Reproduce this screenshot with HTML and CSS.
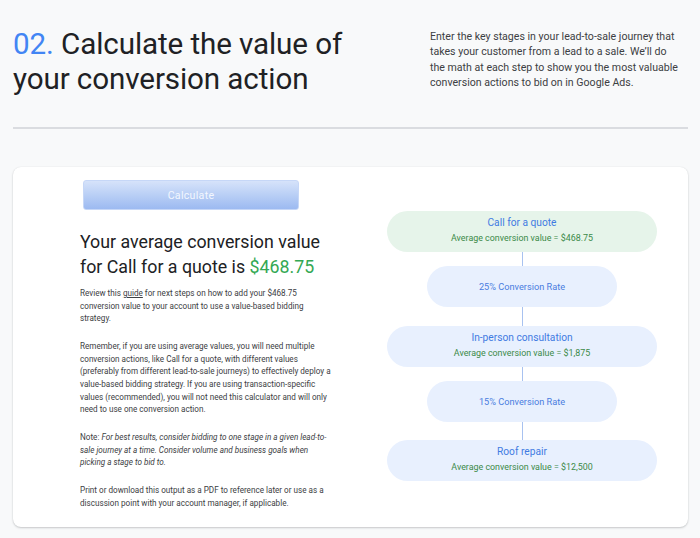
FILE: index.html
```html
<!DOCTYPE html>
<html lang="en">
<head>
<meta charset="utf-8">
<title>Calculate the value of your conversion action</title>
<link rel="stylesheet" href="styles.css">
</head>
<body>
<header class="intro">
  <h1 class="title"><span class="num">02.</span> Calculate the value of your conversion action</h1>
  <p class="lead">Enter the key stages in your lead-to-sale journey that takes your customer from a lead to a sale. We’ll do the math at each step to show you the most valuable conversion actions to bid on in Google Ads.</p>
</header>
<hr class="divider">
<section class="card">
  <div class="result">
    <div class="btn-wrap"><button class="calc" type="button">Calculate</button></div>
    <h2 class="result-title">Your average conversion value for Call for a quote is <span class="money">$468.75</span></h2>
    <p class="copy">Review this <a href="#" class="link">guide</a> for next steps on how to add your $468.75 conversion value to your account to use a value-based bidding strategy.</p>
    <p class="copy">Remember, if you are using average values, you will need multiple conversion actions, like Call for a quote, with different values (preferably from different lead-to-sale journeys) to effectively deploy a value-based bidding strategy. If you are using transaction-specific values (recommended), you will not need this calculator and will only need to use one conversion action.</p>
    <p class="copy">Note: <em>For best results, consider bidding to one stage in a given lead-to-sale journey at a time. Consider volume and business goals when picking a stage to bid to.</em></p>
    <p class="copy">Print or download this output as a PDF to reference later or use as a discussion point with your account manager, if applicable.</p>
  </div>
  <div class="flow">
    <div class="pill stage active">
      <div class="stage-name">Call for a quote</div>
      <div class="stage-value">Average conversion value = $468.75</div>
    </div>
    <div class="link-line l14"></div>
    <div class="pill rate">25% Conversion Rate</div>
    <div class="link-line l19"></div>
    <div class="pill stage">
      <div class="stage-name">In-person consultation</div>
      <div class="stage-value">Average conversion value = $1,875</div>
    </div>
    <div class="link-line l14"></div>
    <div class="pill rate">15% Conversion Rate</div>
    <div class="link-line l18"></div>
    <div class="pill stage">
      <div class="stage-name">Roof repair</div>
      <div class="stage-value">Average conversion value = $12,500</div>
    </div>
  </div>
</section>
</body>
</html>
```
FILE: styles.css
```css
html, body {
  margin: 0;
  padding: 0;
  background: #f8f9fa;
  font-family: Roboto, "Noto Sans", sans-serif;
  color: #202124;
}
body {
  padding: 0 12px 0 13px;
  height: 538px;
  overflow: hidden;
}
.intro {
  display: flex;
  justify-content: space-between;
  padding-top: 27px;
  height: 99px;
  box-sizing: border-box;
}
.title {
  margin: 0;
  width: 380px;
  font-size: 29.6px;
  line-height: 35px;
  font-weight: 400;
  color: #202124;
  letter-spacing: -0.1px;
}
.num { color: #4285f4; }
.lead {
  margin: 2px 0 0;
  width: 252px;
  margin-right: 6px;
  font-size: 10.6px;
  line-height: 15.3px;
  color: #3c4043;
}
.divider {
  margin: 0;
  border: 0;
  border-top: 2px solid #dadce0;
  margin-top: 28px;
}
.card {
  margin-top: 38px;
  background: #fff;
  border-radius: 8px;
  box-shadow: 0 1px 2px rgba(60,64,67,0.25), 0 0 1px rgba(60,64,67,0.12);
  height: 360px;
  box-sizing: border-box;
  display: flex;
  justify-content: space-between;
  padding: 13px 31px 0 67px;
}
.result { width: 254px; }
.btn-wrap { padding-left: 3px; }
.calc {
  display: block;
  width: 216px;
  height: 30px;
  border: 1px solid #c6d7f7;
  border-radius: 3px;
  background: linear-gradient(#d6e3fa, #9cbaf1);
  color: #f3f7fe;
  font-family: Roboto, sans-serif;
  font-size: 10.6px;
  letter-spacing: 0.3px;
  padding: 0;
}
.result-title {
  margin: 19px 0 8px;
  font-size: 17.8px;
  line-height: 25px;
  font-weight: 400;
  color: #202124;
}
.money { color: #34a853; }
.copy {
  margin: 0 0 15.4px;
  font-size: 8.15px;
  line-height: 12.6px;
  color: #3c4043;
}
.link { color: #3c4043; text-decoration: underline; }
.flow {
  width: 270px;
  padding-top: 31px;
  display: flex;
  flex-direction: column;
  align-items: center;
}
.pill {
  box-sizing: border-box;
  height: 41px;
  border-radius: 21px;
  background: #e8f0fe;
  display: flex;
  flex-direction: column;
  align-items: center;
  justify-content: center;
}
.stage { width: 270px; }
.stage.active { background: #e6f4ea; }
.rate {
  width: 190px;
  font-size: 9.2px;
  color: #4a7de0;
}
.stage-name {
  font-size: 10.2px;
  line-height: 14px;
  color: #3f7be2;
  margin-top: -3px;
}
.stage-value {
  margin-top: 3px;
  font-size: 8.9px;
  line-height: 11px;
  color: #3b8a48;
}
.link-line {
  width: 1px;
  background: #a8c2f0;
}
.l14 { height: 14px; }
.l18 { height: 18px; }
.l19 { height: 19px; }
```
